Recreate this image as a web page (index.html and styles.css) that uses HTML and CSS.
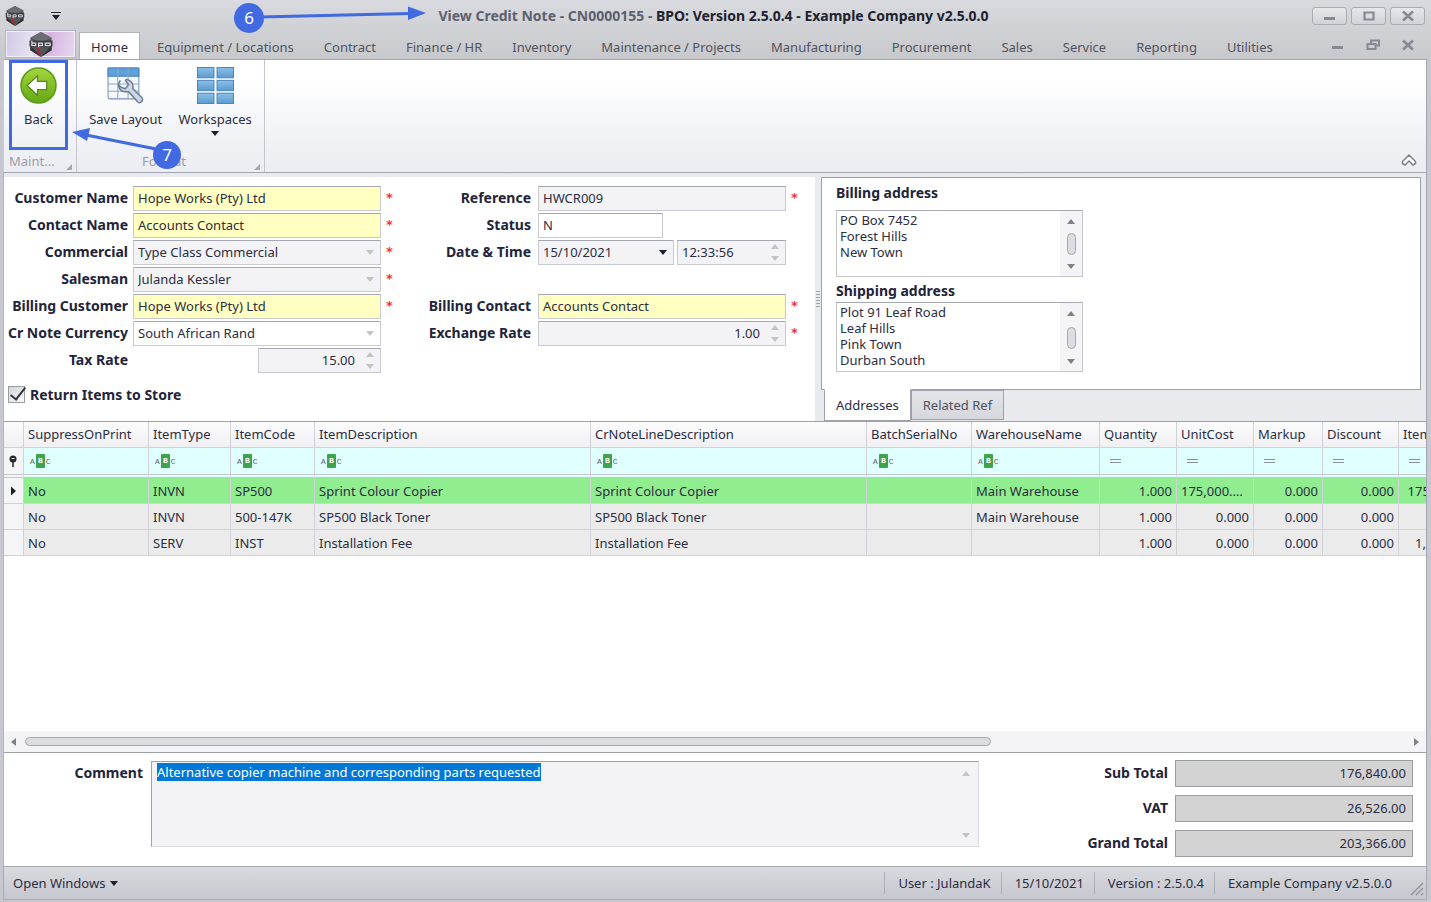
FILE: index.html
```html
<!DOCTYPE html>
<html lang="en">
<head>
  <meta charset="UTF-8" />
  <meta name="viewport" content="width=device-width, initial-scale=1.0"/>
  <title>View Credit Note - CN0000155</title>
  <link rel="stylesheet" href="styles.css">
</head>
<body>
  <svg class="symbols" aria-hidden="true">
    <symbol id="logo" viewBox="0 0 24 26">
      <path d="M12 0 23 6v13L12 26 1 19V6z" fill="#55565a"/>
      <path d="M12 0 23 6 12 11 1 6z" fill="#6c6d71"/>
      <path d="M1 14 12 26 23 14v5L12 26 1 19z" fill="#2f3034"/>
      <path d="M0 9h24v6H0z" fill="#3a3b40"/>
      <path d="M2.500 9v5h4v-2.500h-4M9.500 16v-4.500h4V14h-4M16.500 11.500h5V14h-5z" fill="none" stroke="#e4e4e6" stroke-width="1.200"/>
      <path d="M9 16v4l3 3" fill="none" stroke="#b02030" stroke-width="1.800"/>
    </symbol>
    <symbol id="min" viewBox="0 0 14 12"><path d="M1 8.500h11" stroke="#858993" stroke-width="3"/></symbol>
    <symbol id="close" viewBox="0 0 14 12"><path d="M2 1.500 12 10.500M12 1.500 2 10.500" stroke="#858993" stroke-width="2.600"/></symbol>
    <symbol id="equals" viewBox="0 0 12 6"><path d="M0 1.500h11M0 4.500h11" stroke="#8b8f96" stroke-width="1"/></symbol>
  </svg>

  <div class="window">
    <header class="title-bar">
      <svg class="title-logo"><use href="#logo"/></svg>
      <button class="quick-access" aria-label="Customize toolbar"><span class="arrow down dark"></span></button>
      <h1><span>View Credit Note - CN0000155 - </span>BPO: Version 2.5.0.4 - Example Company v2.5.0.0</h1>
      <div class="window-buttons">
        <button aria-label="Minimize"><svg><use href="#min"/></svg></button>
        <button aria-label="Maximize"><svg viewBox="0 0 14 12"><path d="M2.500 2.500h9v7h-9z" fill="none" stroke="#858993" stroke-width="2.200"/></svg></button>
        <button aria-label="Close"><svg><use href="#close"/></svg></button>
      </div>
      <svg class="callout callout-title" viewBox="0 0 196 36">
        <path d="M30 17 180 13.500" stroke="#4169e1" stroke-width="3"/>
        <path d="M178 6.500 196 13l-18 7z" fill="#4169e1"/>
        <circle cx="19" cy="18" r="15" fill="#4169e1"/>
        <text x="19" y="24" text-anchor="middle">6</text>
      </svg>
    </header>

    <nav class="menu">
      <button class="app-button" aria-label="Application menu"><svg><use href="#logo"/></svg></button>
      <a href="#" class="active">Home</a>
      <a href="#">Equipment / Locations</a>
      <a href="#">Contract</a>
      <a href="#">Finance / HR</a>
      <a href="#">Inventory</a>
      <a href="#">Maintenance / Projects</a>
      <a href="#">Manufacturing</a>
      <a href="#">Procurement</a>
      <a href="#">Sales</a>
      <a href="#">Service</a>
      <a href="#">Reporting</a>
      <a href="#">Utilities</a>
      <div class="mdi-buttons">
        <button aria-label="Minimize document"><svg><use href="#min"/></svg></button>
        <button aria-label="Restore document"><svg viewBox="0 0 14 12"><path d="M5 4V1.500h8v5h-3M1.500 5h8v5h-8z" fill="none" stroke="#858993" stroke-width="2"/></svg></button>
        <button aria-label="Close document"><svg><use href="#close"/></svg></button>
      </div>
    </nav>

    <section class="ribbon">
      <div class="ribbon-group maintain">
        <div class="ribbon-items">
          <button class="ribbon-button back">
            <svg viewBox="0 0 36 36">
              <defs><linearGradient id="green" x2="0" y2="1"><stop stop-color="#a5d63c"/><stop offset="1" stop-color="#63a814"/></linearGradient></defs>
              <circle cx="18" cy="18" r="17" fill="url(#green)" stroke="#5c9a1c" stroke-width="1.500"/>
              <path d="M7 18 17 8.500V14h9v8h-9v5.500z" fill="#fff" stroke="#5b8427" stroke-width="1.200"/>
            </svg>
            Back
          </button>
        </div>
        <div class="group-caption">Maint...</div>
      </div>
      <div class="ribbon-group format">
        <div class="ribbon-items">
          <button class="ribbon-button">
            <svg viewBox="0 0 36 36">
              <rect x="1" y="1" width="30" height="30" rx="1.500" fill="#f4f8fc" stroke="#7990b0"/>
              <path d="M1 1h30v8H1z" fill="#5da3da" stroke="#4a7fb5"/>
              <path d="M10.500 1v30M20.500 1v30M1 16.500h30M1 23.500h30" stroke="#8fa6c2"/>
              <path d="M13 13c-3 4-2 8 1 10 2 1.500 5 1 7 1l9 10c2 2 6-1 4-4L25 21c1-4-1-8-6-9l-1 1 3 4-3 4-4-1-3-3" fill="#ced6e2" stroke="#697a94" stroke-width="1.400"/>
            </svg>
            Save Layout
          </button>
          <button class="ribbon-button">
            <svg viewBox="0 0 36 36">
              <defs><linearGradient id="blue" x2="0" y2="1"><stop stop-color="#8dc0e8"/><stop offset="1" stop-color="#5a9bd0"/></linearGradient></defs>
              <g fill="url(#blue)" stroke="#4c86b8">
                <rect x=".5" y=".5" width="16" height="10"/><rect x="19.500" y=".5" width="16" height="10"/>
                <rect x=".5" y="13" width="16" height="10"/><rect x="19.500" y="13" width="16" height="10"/>
                <rect x=".5" y="25.500" width="16" height="10"/><rect x="19.500" y="25.500" width="16" height="10"/>
              </g>
            </svg>
            Workspaces
            <span class="arrow down dark"></span>
          </button>
        </div>
        <div class="group-caption">Format</div>
      </div>
      <button class="collapse" aria-label="Collapse ribbon">
        <svg viewBox="0 0 16 14"><path d="M1.500 8.500 8 2l6.500 6.500v2L12 12 8 8l-4 4-2.500-1.500z" fill="#fff" stroke="#7d818a" stroke-width="1.500"/></svg>
      </button>
      <svg class="callout callout-back" viewBox="0 0 112 50">
        <path d="M86 29 16 15" stroke="#4169e1" stroke-width="3"/>
        <path d="M2 12 20 8l-3 13z" fill="#4169e1"/>
        <circle cx="97" cy="35" r="14" fill="#4169e1"/>
        <text x="97" y="41" text-anchor="middle">7</text>
      </svg>
    </section>

    <main>
      <div class="details">
        <form class="credit-form">
          <div class="form-column">
            <div class="row"><label for="customer">Customer Name</label><div class="field yellow"><input id="customer" value="Hope Works (Pty) Ltd"></div><i>*</i></div>
            <div class="row"><label for="contact">Contact Name</label><div class="field yellow"><input id="contact" value="Accounts Contact"></div><i>*</i></div>
            <div class="row"><label for="class">Commercial</label><div class="field grey"><select id="class"><option>Type Class Commercial</option></select><span class="arrow down"></span></div><i>*</i></div>
            <div class="row"><label for="salesman">Salesman</label><div class="field grey"><select id="salesman"><option>Julanda Kessler</option></select><span class="arrow down"></span></div><i>*</i></div>
            <div class="row"><label for="billing">Billing Customer</label><div class="field yellow"><input id="billing" value="Hope Works (Pty) Ltd"></div><i>*</i></div>
            <div class="row"><label for="currency">Cr Note Currency</label><div class="field"><select id="currency"><option>South African Rand</option></select><span class="arrow down"></span></div></div>
            <div class="row"><label for="tax">Tax Rate</label><div class="field grey short right"><input id="tax" value="15.00"><span class="spinner"><span class="arrow up"></span><span class="arrow down"></span></span></div></div>
            <label class="return-items">
              <input type="checkbox" checked>
              <span>Return Items to Store</span>
            </label>
          </div>
          <div class="form-column">
            <div class="row"><label for="reference">Reference</label><div class="field grey"><input id="reference" value="HWCR009"></div><i>*</i></div>
            <div class="row"><label for="status">Status</label><div class="field status"><input id="status" value="N"></div></div>
            <div class="row"><label for="date">Date &amp; Time</label>
              <div class="date-time">
                <div class="field grey date"><input id="date" value="15/10/2021"><span class="arrow down dark"></span></div>
                <div class="field grey time"><input aria-label="Time" value="12:33:56"><span class="spinner"><span class="arrow up"></span><span class="arrow down"></span></span></div>
              </div>
            </div>
            <div class="row"></div>
            <div class="row"><label for="billing-contact">Billing Contact</label><div class="field yellow"><input id="billing-contact" value="Accounts Contact"></div><i>*</i></div>
            <div class="row"><label for="exchange">Exchange Rate</label><div class="field grey right"><input id="exchange" value="1.00"><span class="spinner"><span class="arrow up"></span><span class="arrow down"></span></span></div><i>*</i></div>
          </div>
        </form>
        <div class="splitter"><span></span></div>
        <aside class="side">
          <div class="side-panel">
            <label for="billing-address">Billing address</label>
            <div class="address">
              <textarea id="billing-address" rows="4">PO Box 7452
Forest Hills
New Town</textarea>
              <div class="v-scroll"><span class="arrow up"></span><span class="thumb"></span><span class="arrow down"></span></div>
            </div>
            <label for="shipping-address">Shipping address</label>
            <div class="address">
              <textarea id="shipping-address" rows="4">Plot 91 Leaf Road
Leaf Hills
Pink Town
Durban South</textarea>
              <div class="v-scroll"><span class="arrow up"></span><span class="thumb"></span><span class="arrow down"></span></div>
            </div>
          </div>
          <div class="side-tabs">
            <button class="active">Addresses</button>
            <button>Related Ref</button>
          </div>
        </aside>
      </div>

      <div class="grid">
        <div class="grid-view">
          <table>
            <colgroup>
              <col class="c-mark"><col class="c-suppress"><col class="c-type"><col class="c-code"><col class="c-desc"><col class="c-desc"><col class="c-batch"><col class="c-warehouse"><col class="c-qty"><col class="c-cost"><col class="c-markup"><col class="c-discount"><col class="c-total">
            </colgroup>
            <thead>
              <tr>
                <th></th><th>SuppressOnPrint</th><th>ItemType</th><th>ItemCode</th><th>ItemDescription</th><th>CrNoteLineDescription</th><th>BatchSerialNo</th><th>WarehouseName</th><th>Quantity</th><th>UnitCost</th><th>Markup</th><th>Discount</th><th>ItemTotal</th>
              </tr>
              <tr class="filter">
                <td class="mark"><svg viewBox="0 0 10 12"><circle cx="5" cy="4" r="3.500" fill="#25272f"/><path d="M5 6v6" stroke="#25272f" stroke-width="1.500"/><path d="M3.500 3.500h3" stroke="#fff"/></svg></td>
                <td><span class="abc">A<b>B</b>C</span></td>
                <td><span class="abc">A<b>B</b>C</span></td>
                <td><span class="abc">A<b>B</b>C</span></td>
                <td><span class="abc">A<b>B</b>C</span></td>
                <td><span class="abc">A<b>B</b>C</span></td>
                <td><span class="abc">A<b>B</b>C</span></td>
                <td><span class="abc">A<b>B</b>C</span></td>
                <td><svg class="equals"><use href="#equals"/></svg></td>
                <td><svg class="equals"><use href="#equals"/></svg></td>
                <td><svg class="equals"><use href="#equals"/></svg></td>
                <td><svg class="equals"><use href="#equals"/></svg></td>
                <td><svg class="equals"><use href="#equals"/></svg></td>
              </tr>
            </thead>
            <tbody>
              <tr class="selected">
                <td class="mark"><svg viewBox="0 0 10 12"><path d="M3 1.500 8 6l-5 4.500z" fill="#1d1f28"/></svg></td>
                <td>No</td><td>INVN</td><td>SP500</td><td>Sprint Colour Copier</td><td>Sprint Colour Copier</td><td></td><td>Main Warehouse</td><td class="num">1.000</td><td class="num cost">175,000.000</td><td class="num">0.000</td><td class="num">0.000</td><td class="num">175,000.00</td>
              </tr>
              <tr>
                <td class="mark"></td>
                <td>No</td><td>INVN</td><td>500-147K</td><td>SP500 Black Toner</td><td>SP500 Black Toner</td><td></td><td>Main Warehouse</td><td class="num">1.000</td><td class="num">0.000</td><td class="num">0.000</td><td class="num">0.000</td><td class="num">0.000</td>
              </tr>
              <tr>
                <td class="mark"></td>
                <td>No</td><td>SERV</td><td>INST</td><td>Installation Fee</td><td>Installation Fee</td><td></td><td></td><td class="num">1.000</td><td class="num">0.000</td><td class="num">0.000</td><td class="num">0.000</td><td class="num">1,840.000</td>
              </tr>
            </tbody>
          </table>
        </div>
        <div class="h-scroll"><span class="arrow left"></span><div class="track"><span class="thumb"></span></div><span class="arrow right-arrow"></span></div>
      </div>

      <div class="footer-form">
        <label class="comment-label" for="comment">Comment</label>
        <div class="comment">
          <textarea id="comment">Alternative copier machine and corresponding parts requested</textarea>
          <div class="comment-scroll"><span class="arrow up"></span><span class="arrow down"></span></div>
        </div>
        <div class="totals">
          <label for="sub-total">Sub Total</label><input id="sub-total" value="176,840.00" readonly>
          <label for="vat">VAT</label><input id="vat" value="26,526.00" readonly>
          <label for="grand-total">Grand Total</label><input id="grand-total" value="203,366.00" readonly>
        </div>
      </div>
    </main>

    <footer class="status-bar">
      <button>Open Windows <span class="arrow down dark"></span></button>
      <span class="status-item">User : JulandaK</span>
      <span class="status-item">15/10/2021</span>
      <span class="status-item">Version : 2.5.0.4</span>
      <span class="status-item">Example Company v2.5.0.0</span>
      <svg class="grip" viewBox="0 0 14 14"><path d="M1 13 13 1M6 13l7-7M11 13l2-2" stroke="#8e919b" stroke-width="1.300"/></svg>
    </footer>
  </div>

  <script>
    const comment = document.getElementById('comment');
    comment.focus();
    comment.select();
  </script>
</body>
</html>
```
FILE: styles.css
```css
* {
  margin: 0;
  padding: 0;
  box-sizing: border-box;
}

body {
  font-family: 'Noto Sans', sans-serif;
  font-size: 13px;
  color: #2b2d42;
  background-color: #c6c7cd;
}

button, input, select, textarea {
  font: inherit;
  color: inherit;
  border: none;
  background: none;
  outline: none;
}

a {
  color: inherit;
  text-decoration: none;
}

label {
  font-weight: 700;
  font-size: 14px;
  color: #22243a;
}

.symbols {
  position: absolute;
  width: 0;
  height: 0;
}

.window {
  display: flex;
  flex-direction: column;
  min-height: 100vh;
  padding: 0 4px 2px 3px;
  background: linear-gradient(#d9dadf, #c8c9cc 58px, #c6c7cf 60px);
}

/* small triangles */
.arrow {
  flex: none;
  width: 0;
  height: 0;
  border: 4px solid transparent;
}

.arrow.down {
  border-top: 5px solid #c3c4c9;
  border-bottom: none;
}

.arrow.up {
  border-bottom: 5px solid #c3c4c9;
  border-top: none;
}

.arrow.dark {
  border-top-color: #1d1f2c;
}

.arrow.left {
  border-right: 5px solid #7d8088;
  border-left: none;
}

.arrow.right-arrow {
  border-left: 5px solid #7d8088;
  border-right: none;
}

/* title bar */
.title-bar {
  position: relative;
  display: flex;
  align-items: center;
  height: 31px;
  padding: 0 2px;
}

.title-logo {
  width: 20px;
  height: 20px;
}

.quick-access {
  display: flex;
  justify-content: center;
  width: 10px;
  margin-left: 26px;
  padding-top: 2px;
  border-top: 1px solid #1d1f2c;
}

.title-bar h1 {
  flex: 1;
  padding-left: 54px;
  font-size: 14px;
  text-align: center;
  white-space: pre;
  color: #20222e;
}

.title-bar h1 span {
  color: #5d606e;
}

.window-buttons {
  display: flex;
  gap: 4px;
}

.window-buttons button {
  width: 35px;
  height: 18px;
  border: 1px solid #a9abb4;
  border-radius: 3px;
  background: linear-gradient(#e6e7ea, #d2d3d8);
}

.window-buttons svg, .mdi-buttons svg {
  display: block;
  width: 14px;
  height: 12px;
  margin: 0 auto;
}

.callout {
  position: absolute;
  z-index: 2;
  pointer-events: none;
}

.callout text {
  font-size: 17px;
  fill: #fff;
}

.callout-title {
  left: 227px;
  top: 0;
  width: 196px;
  height: 36px;
}

.callout-back {
  left: 66px;
  top: 60px;
  width: 112px;
  height: 50px;
}

/* ribbon tabs */
.menu {
  display: flex;
  height: 28px;
  padding-left: 3px;
}

.menu a {
  padding: 0 15px;
  line-height: 32px;
  white-space: nowrap;
  color: #50535f;
}

.menu a.active {
  margin: 1px 2px 0 4px;
  padding: 0 11px;
  line-height: 28px;
  border: 1px solid #b0b2ba;
  border-bottom: none;
  background-color: #fff;
  color: #2b2d42;
}

.app-button {
  width: 69px;
  height: 26px;
  border: 1px solid #f4eef8;
  background: linear-gradient(100deg, #cfcbe4, #e9e2f2 40%, #d6b4e0 60%, #e6d6ef);
  outline: 1px solid #b5b2c4;
}

.app-button svg {
  display: block;
  width: 24px;
  height: 25px;
  margin: 0 auto;
}

.mdi-buttons {
  display: flex;
  align-items: center;
  gap: 21px;
  margin: 0 12px 0 auto;
}

/* ribbon */
.ribbon {
  position: relative;
  display: flex;
  height: 114px;
  border: 1px solid #a3a6b0;
  border-left-color: #c9cad2;
  background: linear-gradient(#fff 20%, #f3f4f8 60%, #ecedf2);
}

.ribbon-group {
  display: flex;
  flex-direction: column;
  border-right: 1px solid #c4c6ce;
}

.maintain {
  width: 73px;
}

.format {
  width: 188px;
}

.ribbon-items {
  display: flex;
  height: 91px;
}

.format .ribbon-items {
  padding: 0 4px;
}

.ribbon-button {
  flex: auto;
  display: flex;
  flex-direction: column;
  align-items: center;
  padding-top: 7px;
  line-height: 18px;
}

.ribbon-button svg {
  width: 37px;
  height: 37px;
  margin-bottom: 6px;
}

.ribbon-button .arrow {
  margin-top: 3px;
}

.ribbon-button.back {
  flex: none;
  width: 59px;
  margin-left: 5px;
  padding-top: 4px;
  border: 3px solid #4169e1;
}

.group-caption {
  position: relative;
  padding: 0 5px;
  line-height: 22px;
  color: #9b9da7;
}

.group-caption::after {
  content: '';
  position: absolute;
  right: 4px;
  bottom: 2px;
  border: 3px solid #a5a7af;
  border-top-color: transparent;
  border-left-color: transparent;
}

.format .group-caption {
  text-align: center;
  padding-right: 18px;
}

.collapse {
  align-self: flex-end;
  width: 16px;
  height: 14px;
  margin: 0 9px 5px auto;
}

.collapse svg {
  display: block;
}

/* credit note details */
main {
  flex: 1;
  display: flex;
  flex-direction: column;
  border-right: 1px solid #a3a6b0;
  border-left: 1px solid #b3b5bd;
  background-color: #fff;
}

.details {
  display: flex;
  padding-top: 4px;
  background-color: #e9eaee;
}

.credit-form {
  flex: 811;
  display: flex;
  gap: 10px;
  padding-top: 9px;
  background-color: #fff;
}

.form-column {
  display: flex;
  flex-direction: column;
  gap: 2px;
}

.row {
  display: flex;
  height: 25px;
}

.row label {
  width: 124px;
  margin-right: 5px;
  line-height: 24px;
  text-align: right;
  white-space: nowrap;
}

.form-column + .form-column .row label {
  width: 127px;
  margin-right: 7px;
}

.row i {
  width: 8px;
  margin-left: 5px;
  font-family: 'DejaVu Sans', sans-serif;
  font-style: normal;
  font-weight: 700;
  line-height: 23px;
  color: #f0323c;
}

.field {
  display: flex;
  align-items: center;
  width: 248px;
  padding: 0 6px 0 4px;
  border: 1px solid #c9cad0;
  border-top-color: #a6a8af;
  background-color: #fff;
}

.field input, .field select {
  flex: 1;
  min-width: 0;
  padding-bottom: 2px;
  appearance: none;
}

.yellow {
  background-color: #feffc0;
}

.grey {
  background-color: #f3f3f6;
}

.short {
  width: 123px;
  margin-left: 125px;
}

.right input {
  padding-right: 11px;
  text-align: right;
}

.status {
  width: 125px;
}

.date-time {
  display: flex;
  gap: 3px;
}

.date {
  width: 136px;
}

.time {
  width: 109px;
}

.spinner {
  display: flex;
  flex-direction: column;
  gap: 7px;
}

.return-items {
  display: flex;
  align-items: center;
  gap: 5px;
  height: 46px;
  padding: 0 0 8px 4px;
}

.return-items input {
  appearance: none;
  position: relative;
  width: 17px;
  height: 17px;
  border: 1px solid #9a9ca5;
  background: linear-gradient(135deg, #d4d5da, #fafafa);
}

.return-items input:checked::after {
  content: '';
  position: absolute;
  left: 5px;
  top: -3px;
  width: 6px;
  height: 14px;
  border: solid #33353d;
  border-width: 0 2px 2px 0;
  transform: rotate(38deg);
}

.splitter {
  display: flex;
  align-items: center;
  width: 6px;
}

.splitter span {
  width: 4px;
  height: 17px;
  margin-left: 1px;
  background: repeating-linear-gradient(#a2a4ac 0 1px, transparent 1px 3px);
}

/* addresses */
.side {
  flex: 600;
  padding-right: 5px;
}

.side-panel {
  height: 213px;
  padding: 4px 14px;
  border: 1px solid #9fa1aa;
  background-color: #fff;
}

.side-panel label {
  display: block;
  line-height: 22px;
}

.address {
  display: flex;
  width: 247px;
  height: 67px;
  margin: 6px 0 3px;
  border: 1px solid #c4c6cc;
  border-top-color: #a6a8af;
}

.address + label + .address {
  height: 70px;
  margin: 0;
}

.address textarea {
  flex: 1;
  min-width: 0;
  padding: 1px 3px;
  line-height: 16px;
  resize: none;
  overflow: hidden;
}

.v-scroll {
  display: flex;
  flex-direction: column;
  align-items: center;
  justify-content: space-between;
  width: 22px;
  padding: 8px 0 7px;
  background-color: #f4f4f7;
}

.v-scroll .arrow {
  border-top-color: #7d8088;
  border-bottom-color: #7d8088;
}

.v-scroll .arrow.up {
  border-top-color: transparent;
}

.thumb {
  border: 1px solid #a4a6ae;
  border-radius: 5px;
  background-color: #dcdde1;
}

.v-scroll .thumb {
  width: 9px;
  height: 22px;
}

.side-tabs {
  display: flex;
  align-items: flex-start;
  padding-left: 3px;
}

.side-tabs button {
  height: 30px;
  padding: 0 11px;
  border: 1px solid #9fa1aa;
  background: linear-gradient(#e4e5e9, #d6d7dc);
  color: #50535f;
}

.side-tabs .active {
  height: 32px;
  margin-top: -1px;
  border-top-color: #fff;
  background: #fff;
  color: #2b2d42;
}

/* item grid */
.grid {
  flex: 1;
  display: flex;
  flex-direction: column;
  border: 1px solid #9fa1aa;
  border-width: 1px 0;
}

.grid-view {
  flex: 1;
  overflow: hidden;
}

table {
  width: 1475px;
  table-layout: fixed;
  border-collapse: separate;
  border-spacing: 0;
}

.c-mark { width: 20px; }
.c-suppress { width: 125px; }
.c-type { width: 82px; }
.c-code { width: 84px; }
.c-desc { width: 276px; }
.c-batch { width: 105px; }
.c-warehouse { width: 128px; }
.c-qty { width: 77px; }
.c-cost { width: 77px; }
.c-markup { width: 69px; }
.c-discount { width: 76px; }
.c-total { width: 80px; }

th, td {
  height: 26px;
  padding: 0 4px;
  border-right: 1px solid #d0d1d9;
  border-bottom: 1px solid #d0d1d9;
  background-color: #ebebec;
  text-align: left;
  font-weight: 400;
  white-space: nowrap;
  overflow: hidden;
}

th {
  padding-bottom: 1px;
  background: linear-gradient(#fbfbfc, #f0f0f3);
}

.filter td {
  height: 30px;
  border-bottom: 4px double #c5c6ce;
  background-color: #e0ffff;
}

.selected td {
  background-color: #90ee90;
}

.num {
  text-align: right;
}

.cost {
  text-overflow: ellipsis;
}

td.mark {
  padding: 0 4px;
  background-color: #f5f5f7;
}

.mark svg {
  display: block;
  width: 10px;
  height: 12px;
}

.abc {
  display: flex;
  align-items: center;
  gap: 1px;
  padding-left: 2px;
  font-family: 'Liberation Mono', monospace;
  font-size: 8px;
  color: #5f636a;
}

.abc b {
  width: 9px;
  line-height: 14px;
  border-radius: 1px;
  background-color: #3fa34d;
  color: #fff;
  text-align: center;
}

.equals {
  display: block;
  width: 12px;
  height: 6px;
  margin-left: 6px;
}

.h-scroll {
  display: flex;
  align-items: center;
  gap: 9px;
  height: 21px;
  padding: 0 7px;
  background-color: #f4f4f7;
}

.track {
  flex: 1;
}

.h-scroll .thumb {
  display: block;
  width: 70%;
  height: 9px;
}

/* comment and totals */
.footer-form {
  display: flex;
  height: 113px;
  padding: 7px 13px 0 0;
}

.comment-label {
  width: 139px;
  margin-right: 8px;
  line-height: 26px;
  text-align: right;
}

.comment {
  flex: 1;
  display: flex;
  height: 86px;
  margin-top: 1px;
  border: 1px solid #dadbe0;
  border-top-color: #9fa1aa;
  border-left-color: #9fa1aa;
  background-color: #f3f3f6;
}

.comment textarea {
  flex: 1;
  padding: 2px 5px;
  line-height: 16px;
  resize: none;
  overflow: hidden;
}

.comment textarea::selection {
  background-color: #0078d7;
  color: #fff;
}

.comment-scroll {
  display: flex;
  flex-direction: column;
  justify-content: space-between;
  width: 16px;
  padding: 9px 0 8px;
}

.totals {
  display: grid;
  grid-template-columns: 189px 238px;
  grid-auto-rows: 27px;
  gap: 8px 7px;
}

.totals label {
  line-height: 26px;
  text-align: right;
}

.totals input {
  padding: 0 6px 2px;
  border: 1px solid #9b9da3;
  background-color: #d3d3d3;
  text-align: right;
}

/* status bar */
.status-bar {
  display: flex;
  align-items: center;
  height: 34px;
  padding-left: 9px;
  border: 1px solid #a9abb4;
  background: linear-gradient(#d9dade, #c6c7cf);
}

.status-bar button {
  display: flex;
  align-items: center;
  gap: 5px;
  margin-right: auto;
}

.status-item {
  padding: 0 10px 0 13px;
  line-height: 22px;
  border-left: 1px solid #abadb7;
}

.grip {
  align-self: flex-end;
  width: 14px;
  height: 14px;
  margin: 0 2px 3px 8px;
}
```
